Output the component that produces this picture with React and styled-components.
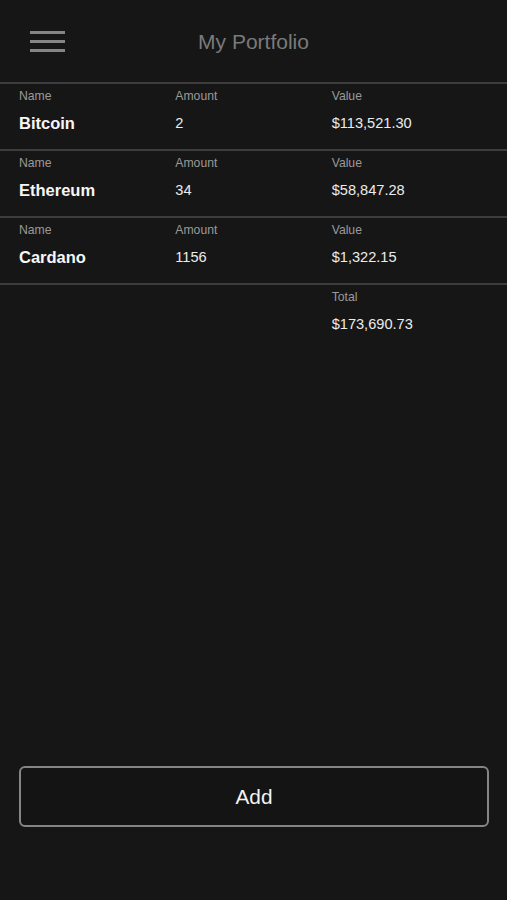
import React from "react";
import styled, { createGlobalStyle } from "styled-components";

const GlobalStyle = createGlobalStyle`
  html, body { margin: 0; padding: 0; background: #161616; }
  body { font-family: "Liberation Sans", Arial, sans-serif; -webkit-font-smoothing: antialiased; }
  * { box-sizing: border-box; }
`;

const Page = styled.div`
  min-height: 100vh;
  display: flex;
  flex-direction: column;
  background: #161616;
  color: #f0f0f0;
`;

const Header = styled.header`
  height: 82px;
  display: grid;
  grid-template-columns: 1fr auto 1fr;
  align-items: center;
  padding: 0 30px;
`;

const MenuButton = styled.button`
  justify-self: start;
  width: 35px;
  height: 21px;
  margin-top: 1px;
  padding: 0;
  border: none;
  background: none;
  display: flex;
  flex-direction: column;
  justify-content: space-between;
  cursor: pointer;
`;

const MenuLine = styled.span`
  display: block;
  height: 3px;
  width: 100%;
  background: #858585;
`;

const Title = styled.h1`
  margin: 2px 0 0;
  font-size: 21px;
  font-weight: 400;
  color: #7a7a7a;
  line-height: 24px;
`;

const Divider = styled.div`
  height: 2px;
  background: #3d3d3d;
`;

const Row = styled.div`
  height: 65px;
  display: grid;
  grid-template-columns: repeat(3, 1fr);
  padding: 5px 19px 0;
`;

const Cell = styled.div`
  grid-column: ${(p) => p.$col || "auto"};
  display: flex;
  flex-direction: column;
`;

const Label = styled.div`
  font-size: 12.2px;
  line-height: 14px;
  color: #9a9a9a;
`;

const Value = styled.div`
  margin-top: 10px;
  line-height: 20px;
  font-size: ${(p) => (p.$primary ? "16.5px" : "14.6px")};
  font-weight: ${(p) => (p.$primary ? 700 : 400)};
  color: ${(p) => (p.$primary ? "#f6f6f6" : "#ececec")};
`;

const Footer = styled.div`
  margin-top: auto;
  padding: 0 18px 73px 19px;
`;

const AddButton = styled.button`
  width: 100%;
  height: 61px;
  border: 2px solid #858585;
  border-radius: 6px;
  background: #141414;
  color: #f2f2f2;
  font-family: "Liberation Sans", Arial, sans-serif;
  font-size: 20.8px;
  cursor: pointer;
`;

const coins = [
  { name: "Bitcoin", amount: "2", value: "$113,521.30" },
  { name: "Ethereum", amount: "34", value: "$58,847.28" },
  { name: "Cardano", amount: "1156", value: "$1,322.15" },
];

export default function App() {
  return (
    <>
      <GlobalStyle />
      <Page>
        <Header>
          <MenuButton aria-label="Menu">
            <MenuLine />
            <MenuLine />
            <MenuLine />
          </MenuButton>
          <Title>My Portfolio</Title>
          <span />
        </Header>
        {coins.map((c) => (
          <React.Fragment key={c.name}>
            <Divider />
            <Row>
              <Cell>
                <Label>Name</Label>
                <Value $primary>{c.name}</Value>
              </Cell>
              <Cell>
                <Label>Amount</Label>
                <Value>{c.amount}</Value>
              </Cell>
              <Cell>
                <Label>Value</Label>
                <Value>{c.value}</Value>
              </Cell>
            </Row>
          </React.Fragment>
        ))}
        <Divider />
        <Row>
          <Cell $col="3">
            <Label>Total</Label>
            <Value>$173,690.73</Value>
          </Cell>
        </Row>
        <Footer>
          <AddButton>Add</AddButton>
        </Footer>
      </Page>
    </>
  );
}
